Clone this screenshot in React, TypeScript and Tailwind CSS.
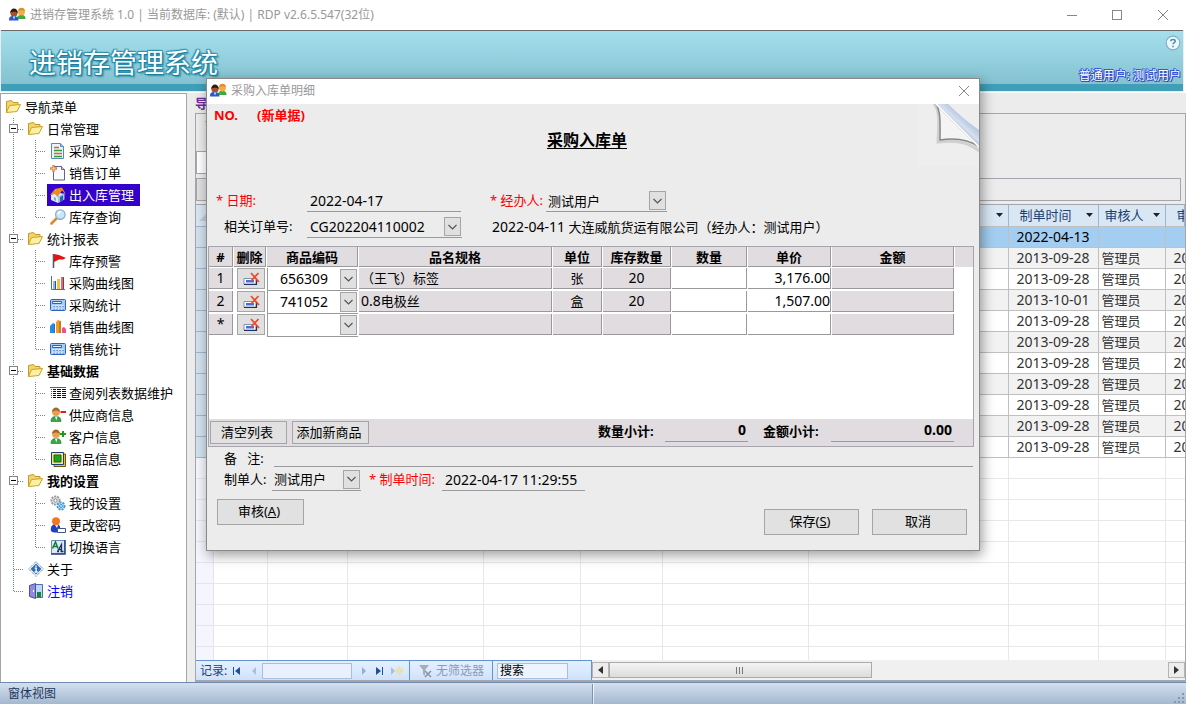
import clsx from "clsx";
import type { ReactNode } from "react";

type IconName =
  | "folder"
  | "doc"
  | "newDoc"
  | "home"
  | "search"
  | "flag"
  | "chart"
  | "calc"
  | "bars"
  | "list"
  | "userMinus"
  | "userPlus"
  | "box"
  | "gears"
  | "password"
  | "language"
  | "about"
  | "logout";

type Line = "tee" | "elbow" | "pipe" | "minus";

type TreeItem = {
  label: string;
  icon: IconName;
  lines: Line[];
  bold?: boolean;
  active?: boolean;
  link?: boolean;
};

const tree: TreeItem[] = [
  { label: "导航菜单", icon: "folder", lines: [] },
  { label: "日常管理", icon: "folder", lines: ["minus"] },
  { label: "采购订单", icon: "doc", lines: ["pipe", "tee"] },
  { label: "销售订单", icon: "newDoc", lines: ["pipe", "tee"] },
  { label: "出入库管理", icon: "home", lines: ["pipe", "tee"], active: true },
  { label: "库存查询", icon: "search", lines: ["pipe", "elbow"] },
  { label: "统计报表", icon: "folder", lines: ["minus"] },
  { label: "库存预警", icon: "flag", lines: ["pipe", "tee"] },
  { label: "采购曲线图", icon: "chart", lines: ["pipe", "tee"] },
  { label: "采购统计", icon: "calc", lines: ["pipe", "tee"] },
  { label: "销售曲线图", icon: "bars", lines: ["pipe", "tee"] },
  { label: "销售统计", icon: "calc", lines: ["pipe", "elbow"] },
  { label: "基础数据", icon: "folder", lines: ["minus"], bold: true },
  { label: "查阅列表数据维护", icon: "list", lines: ["pipe", "tee"] },
  { label: "供应商信息", icon: "userMinus", lines: ["pipe", "tee"] },
  { label: "客户信息", icon: "userPlus", lines: ["pipe", "tee"] },
  { label: "商品信息", icon: "box", lines: ["pipe", "elbow"] },
  { label: "我的设置", icon: "folder", lines: ["minus"], bold: true },
  { label: "我的设置", icon: "gears", lines: ["pipe", "tee"] },
  { label: "更改密码", icon: "password", lines: ["pipe", "tee"] },
  { label: "切换语言", icon: "language", lines: ["pipe", "elbow"] },
  { label: "关于", icon: "about", lines: ["tee"] },
  { label: "注销", icon: "logout", lines: ["elbow"], link: true },
];

const records = [
  { date: "2022-04-13", auditor: "", next: "" },
  { date: "2013-09-28", auditor: "管理员", next: "20" },
  { date: "2013-09-28", auditor: "管理员", next: "20" },
  { date: "2013-10-01", auditor: "管理员", next: "20" },
  { date: "2013-09-28", auditor: "管理员", next: "20" },
  { date: "2013-09-28", auditor: "管理员", next: "20" },
  { date: "2013-09-28", auditor: "管理员", next: "20" },
  { date: "2013-09-28", auditor: "管理员", next: "20" },
  { date: "2013-09-28", auditor: "管理员", next: "20" },
  { date: "2013-09-28", auditor: "管理员", next: "20" },
  { date: "2013-09-28", auditor: "管理员", next: "20" },
];

const items = [
  { no: "1", code: "656309", name: "（王飞）标签", unit: "张", stock: "20", price: "3,176.00" },
  { no: "2", code: "741052", name: "0.8电极丝", unit: "盒", stock: "20", price: "1,507.00" },
  { no: "*", code: "", name: "", unit: "", stock: "", price: "" },
];

export default function App() {
  return (
    <div className="relative flex h-screen flex-col overflow-hidden bg-[#ececec] font-['Noto_Sans','Noto_Sans_CJK_SC',sans-serif] text-[13px] leading-5 text-black">
      <TitleBar />
      <Banner />
      <div className="flex min-h-0 flex-1">
        <NavTree />
        <main className="flex min-w-0 flex-1 flex-col pl-2">
          <div className="h-5 font-bold text-[#7030a0]">导</div>
          <div className="flex min-h-0 flex-1 flex-col border border-b-2 border-[#a5a5ad]">
            <Filters />
            <Datasheet />
            <RecordBar />
          </div>
        </main>
      </div>
      <footer className="flex h-[22px] shrink-0 items-center border-t border-[#6f8bb0] bg-linear-to-b from-[#d3e0ef] to-[#a4b8d0] text-[12px] text-[#1e395b]">
        <span className="w-1/2 border-r border-[#7d93b0] pl-2">窗体视图</span>
        <span className="h-full flex-1 border-l border-white/70" />
        <svg width="12" height="12" className="self-end" fill="#8297b3">
          <path d="M8 1h2v2H8zM8 5h2v2H8zM8 9h2v2H8zM4 5h2v2H4zM4 9h2v2H4zM0 9h2v2H0z" />
        </svg>
      </footer>
      <OrderDialog />
    </div>
  );
}

function TitleBar() {
  return (
    <header className="flex h-[30px] shrink-0 items-center bg-white pl-[9px] text-[12px] text-[#999]">
      <UsersIcon />
      <span className="ml-1 flex-1">
        进销存管理系统 1.0 | 当前数据库: (默认) | RDP v2.6.5.547(32位)
      </span>
      <button aria-label="最小化" className="flex w-[45px] justify-center">
        <svg width="12" height="12" stroke="#888" fill="none">
          <path d="M1 6.5h10" />
        </svg>
      </button>
      <button aria-label="最大化" className="flex w-[45px] justify-center">
        <svg width="12" height="12" stroke="#888" fill="none">
          <rect x="1.5" y="1.5" width="9" height="9" />
        </svg>
      </button>
      <button aria-label="关闭" className="flex w-[47px] justify-center">
        <CloseIcon />
      </button>
    </header>
  );
}

function Banner() {
  return (
    <div className="h-[63px] shrink-0 border-r-2 border-b border-white pr-px pb-px pl-px">
      <div className="flex h-full justify-between border-t border-b-[7px] border-t-[#6a6a6a] border-b-[#3f9fb9] bg-linear-to-b from-[#a5dfec] to-[#84c2d1] pl-7">
        <h1 className="pt-3 text-[27px] leading-10 text-white [text-shadow:1px_1px_1px_#1b7f9c,-1px_-1px_1px_#2b93b0,1px_-1px_1px_#2b93b0,-1px_1px_1px_#1b7f9c,2px_2px_2px_#2b93b0]">
          进销存管理系统
        </h1>
        <div className="flex flex-col items-end justify-between pt-1 pr-0.5">
          <button aria-label="帮助">
            <svg width="16" height="16" viewBox="0 0 16 16">
              <circle cx="8" cy="8" r="6.8" fill="#eef7fb" stroke="#7fb0c8" strokeWidth="1.2" />
              <path d="M5.8 6.2C5.8 4 10.2 4 10.2 6.2 10.2 7.6 8 7.6 8 9.3M8 10.700v1.500" fill="none" stroke="#4a90b5" strokeWidth="1.600" />
            </svg>
          </button>
          <span className="text-[12px] leading-4 text-white [text-shadow:1px_0_#3355dd,-1px_0_#3355dd,0_1px_#3355dd,0_-1px_#3355dd,1px_1px_#333,-1px_-1px_#3355dd]">
            普通用户: 测试用户
          </span>
        </div>
      </div>
    </div>
  );
}

function NavTree() {
  return (
    <nav className="w-[187px] shrink-0 border-t border-r border-l border-[#a5a5a5] bg-white pt-[2px] pl-px">
      <ul>
        {tree.map((item, i) => (
          <li key={i} className="flex h-[22px]">
            {item.lines.map((line, n) => (
              <TreeLine key={n} line={line} />
            ))}
            <a
              href="#"
              className={clsx(
                "ml-px flex items-center gap-[3px] pr-1.5 pl-[3px] whitespace-nowrap",
                item.bold && "font-bold",
                item.active && "bg-[#3300cc] text-white",
                item.link && "text-[#0000ff]"
              )}
            >
              <TreeIcon name={item.icon} />
              {item.label}
            </a>
          </li>
        ))}
      </ul>
    </nav>
  );
}

function TreeLine({ line }: { line: Line }) {
  return (
    <svg width="22" height="22" className="shrink-0" fill="none" stroke="#6f8f6f" strokeDasharray="1 1">
      {line === "elbow" ? <path d="M11.5 0v11" /> : <path d="M11.5 0v22" />}
      {line !== "pipe" && <path d="M12 11.500h10" />}
      {line === "minus" && (
        <g strokeDasharray="none">
          <rect x="7.5" y="6.5" width="8" height="8" fill="#fff" stroke="#848484" />
          <path d="M9 10.500h5" stroke="#000" />
        </g>
      )}
    </svg>
  );
}

function Filters() {
  return (
    <div className="flex h-[90px] shrink-0 flex-col justify-end pr-1 pb-[3px]">
      <div className="flex-1 pl-[9px] font-bold text-[#ed7d31]">*</div>
      <input
        aria-label="查询条件"
        className="mb-1 h-[23px] w-[200px] border border-[#a5a5ad] bg-white"
      />
      <div className="flex h-[23px] border border-[#a5a5ad]">
        <button aria-label="查询" className="w-20 border-r border-[#a5a5ad] bg-[#e0e0e0]" />
      </div>
    </div>
  );
}

function Datasheet() {
  return (
    <div className="min-h-0 flex-1 overflow-hidden border-t border-[#a5a5ad] bg-white">
      <table className="w-full table-fixed border-collapse text-[#333]">
        <colgroup>
          <col className="w-[17px]" />
          <col className="w-[54px]" />
          <col className="w-[80px]" />
          <col className="w-[136px]" />
          <col className="w-[97px]" />
          <col className="w-[82px]" />
          <col className="w-[146px]" />
          <col className="w-[200px]" />
          <col className="w-[90px]" />
          <col className="w-[67px]" />
          <col />
        </colgroup>
        <thead>
          <tr className="h-[21px] bg-[#d9e7f5] text-[#1f3f6e]">
            <th className="border-r border-[#9eb6ce] p-0">
              <svg width="16" height="16" className="block">
                <path d="M14 3v11H3z" fill="#c3ccd6" />
              </svg>
            </th>
            {Array.from({ length: 6 }, (_, i) => (
              <th key={i} className="border-r border-[#9eb6ce] p-0" />
            ))}
            <SortHead label="" />
            <SortHead label="制单时间" />
            <SortHead label="审核人" narrow />
            <SortHead label="审" />
          </tr>
        </thead>
        <tbody>
          {records.map((row, i) => (
            <tr
              key={i}
              className={clsx(
                "h-[21px]",
                i === 0 ? "bg-[#a3cef1] text-black" : i % 2 ? "bg-[#f2f2f2]" : "bg-white"
              )}
            >
              <td className="border border-l-0 border-[#9eb6ce] bg-[#d3e2f0] p-0" />
              {Array.from({ length: 7 }, (_, n) => (
                <td key={n} className="border border-[#c0c0c0] p-0" />
              ))}
              <td className="border border-[#c0c0c0] p-0 text-center text-[14px]">{row.date}</td>
              <td className="border border-[#c0c0c0] p-0 pl-[3px]">{row.auditor}</td>
              <td className="overflow-hidden border border-r-0 border-[#c0c0c0] p-0 pl-2 text-[14px]">
                {row.next}
              </td>
            </tr>
          ))}
          {Array.from({ length: 11 }, (_, i) => (
            <tr key={i} className="h-[21px]">
              <td className="border border-l-0 border-[#e4e4ee] bg-[#f5f5fd] p-0" />
              {Array.from({ length: 10 }, (_, n) => (
                <td key={n} className="border border-r-0 border-[#e8e8e8] p-0" />
              ))}
            </tr>
          ))}
        </tbody>
      </table>
    </div>
  );
}

function SortHead({ label, narrow }: { label: string; narrow?: boolean }) {
  return (
    <th className="overflow-hidden border-r border-[#9eb6ce] p-0 font-normal">
      <div
        className={clsx("flex items-center justify-between pr-[5px]", narrow ? "pl-1.5" : "pl-[11px]")}
      >
        <span className="whitespace-nowrap">{label}</span>
        <svg width="7" height="4" className="shrink-0">
          <path d="M0 0h7L3.500 4z" fill="#222" />
        </svg>
      </div>
    </th>
  );
}

function RecordBar() {
  return (
    <div className="flex h-5 shrink-0 text-[12px] text-[#1f3f6e]">
      <div className="flex w-[396px] shrink-0 items-center border-t border-r border-[#6593cf] bg-linear-to-b from-[#e3efff] via-[#dbeaff] to-[#cfe1f8]">
        <label htmlFor="record" className="w-9 pl-1">
          记录:
        </label>
        <button aria-label="第一条" className="w-[15px]">
          <svg width="9" height="8" fill="#1f4e9c">
            <path d="M1 0h1v8H1zM8 0v8L3 4z" />
          </svg>
        </button>
        <button aria-label="上一条" className="w-[15px]">
          <svg width="8" height="8" className="ml-1" fill="#a8bfe0">
            <path d="M5 0v8L1 4z" />
          </svg>
        </button>
        <input id="record" className="h-4 w-[90px] border border-[#a9bfdf] bg-[#e8f1fd]" />
        <button aria-label="下一条" className="flex w-6 justify-center">
          <svg width="6" height="8" fill="#8fb0dc">
            <path d="M1 0v8l4-4z" />
          </svg>
        </button>
        <button aria-label="最后一条" className="w-[15px]">
          <svg width="9" height="8" fill="#1f4e9c">
            <path d="M6 0h1v8H6zM0 0v8l5-4z" />
          </svg>
        </button>
        <button aria-label="新记录" className="w-[18px]">
          <svg width="14" height="10">
            <path d="M0 1v8l4-4z" fill="#a8bfe0" />
            <path d="M8.500 0v10M4 5h9M5.500 2l6 6M11.500 2l-6 6" stroke="#e8e0b0" strokeWidth="1.500" />
          </svg>
        </button>
        <div className="flex h-full w-[84px] items-center gap-[3px] border-x border-[#6593cf] pl-2 whitespace-nowrap text-[#8b9cb5]">
          <svg width="15" height="14" fill="none">
            <path d="M1 1h10L7 6v6L5 10V6z" fill="#a8adb5" />
            <path d="M7 7l6 6M13 7l-6 6" stroke="#8a93a3" strokeWidth="1.500" />
          </svg>
          无筛选器
        </div>
        <input
          aria-label="搜索"
          defaultValue="搜索"
          className="ml-1 h-4 w-[71px] border border-[#a9bfdf] bg-[#ecf4fd] pl-0.5 text-black"
        />
      </div>
      <div className="flex flex-1 bg-[#f0f0f0] pt-0.5 pb-0.5">
        <button aria-label="向左滚动" className="flex w-[17px] items-center justify-center border border-[#b5b5b5] bg-[#ededed]">
          <svg width="5" height="8">
            <path d="M5 0v8L0 4z" fill="#333" />
          </svg>
        </button>
        <div className="flex flex-1">
          <div className="flex w-[47%] items-center justify-center border border-[#aaa] bg-linear-to-b from-[#f4f4f4] to-[#dcdcdc]">
            <svg width="8" height="7" stroke="#777">
              <path d="M.5 0v7M3.500 0v7M6.500 0v7" />
            </svg>
          </div>
        </div>
        <button aria-label="向右滚动" className="flex w-[17px] items-center justify-center border border-[#b5b5b5] bg-[#ededed]">
          <svg width="5" height="8">
            <path d="M0 0v8l5-4z" fill="#333" />
          </svg>
        </button>
      </div>
    </div>
  );
}

function OrderDialog() {
  return (
    <div
      role="dialog"
      aria-label="采购入库单明细"
      className="absolute top-[78px] left-[206px] w-[774px] border border-[#8a8a8a] bg-[#ececec] shadow-[2px_4px_12px_rgba(0,0,0,0.4)]"
    >
      <div className="flex h-[25px] items-center justify-between bg-white pr-[9px] pb-px pl-[3px] text-[12px] text-[#999]">
        <span className="flex items-center gap-1">
          <UsersIcon />
          采购入库单明细
        </span>
        <button aria-label="关闭">
          <CloseIcon />
        </button>
      </div>

      <div className="relative h-[84px] pt-px">
        <div className="flex gap-[19px] pl-[7px] font-bold text-[#ff0000]">
          <span>NO.</span>
          <span>(新单据)</span>
        </div>
        <h2 className="mr-3 pt-[3px] text-center text-[16px] leading-6 font-bold underline underline-offset-2">
          采购入库单
        </h2>
        <PageCurl />
      </div>

      <div className="flex h-[26px] items-center">
        <FieldLabel htmlFor="date" required className="w-[100px] pl-[9px]">
          日期:
        </FieldLabel>
        <input
          id="date"
          defaultValue="2022-04-17"
          className="h-[22px] w-[154px] border-b border-[#999] pl-[3px] text-[14px]"
        />
        <FieldLabel htmlFor="handler" required className="w-[85px] pl-[29px]">
          经办人:
        </FieldLabel>
        <Combo id="handler" value="测试用户" className="w-[121px] border-b pl-[2px]" />
      </div>
      <div className="flex h-[26px] items-center">
        <FieldLabel htmlFor="order" className="w-[100px] pl-[17px]">
          相关订单号:
        </FieldLabel>
        <Combo id="order" value="CG202204110002" className="w-[155px] border-b pl-[3px] text-[14px]" />
        <span className="pl-[30px]">
          <span className="text-[14px]">2022-04-11</span> 大连威航货运有限公司（经办人：测试用户）
        </span>
      </div>

      <div className="mt-[6px] mr-[5px] ml-px border border-[#a5a5ad] bg-white">
        <div className="h-[172px]">
          <ItemTable />
        </div>
        <div className="flex h-[27px] items-center bg-[#e0dcdf] pl-px">
          <PushButton className="h-[23px] w-[77px]">清空列表</PushButton>
          <PushButton className="ml-[5px] h-[23px] w-[77px]">添加新商品</PushButton>
          <label htmlFor="qty" className="w-[296px] pb-1 pl-[229px] font-bold">
            数量小计:
          </label>
          <input
            id="qty"
            readOnly
            value="0"
            className="h-[19px] w-[83px] border-b border-[#999] pr-0.5 pb-1 text-right text-[14px] font-bold"
          />
          <label htmlFor="sum" className="w-[83px] pb-1 pl-[15px] font-bold">
            金额小计:
          </label>
          <input
            id="sum"
            readOnly
            value="0.00"
            className="h-[19px] w-[123px] border-b border-[#999] pr-0.5 pb-1 text-right text-[14px] font-bold"
          />
        </div>
      </div>

      <div className="flex h-[21px] items-center pr-1.5">
        <label htmlFor="remark" className="w-[67px] pl-[17px] whitespace-pre">
          备   注:
        </label>
        <input id="remark" className="h-[19px] min-w-0 flex-1 border-b border-[#999]" />
      </div>
      <div className="flex h-[23px] items-center">
        <FieldLabel htmlFor="maker" className="w-[65px] pl-[17px]">
          制单人:
        </FieldLabel>
        <Combo id="maker" value="测试用户" className="w-[89px] border-b pl-[2px]" />
        <FieldLabel htmlFor="made" required className="w-[81px] pl-2">
          制单时间:
        </FieldLabel>
        <input
          id="made"
          defaultValue="2022-04-17 11:29:55"
          className="h-[22px] w-[143px] border-b border-[#999] pl-[3px] text-[14px]"
        />
      </div>
      <div className="flex h-[59px] pt-2 pr-3 pl-2.5">
        <PushButton className="h-[26px] w-[87px]">
          审核(<u>A</u>)
        </PushButton>
        <div className="ml-auto flex gap-[13px] pt-2.5">
          <PushButton className="h-[26px] w-[95px]">
            保存(<u>S</u>)
          </PushButton>
          <PushButton className="h-[26px] w-[95px]">取消</PushButton>
        </div>
      </div>
    </div>
  );
}

function ItemTable() {
  return (
    <table className="w-full table-fixed border-collapse">
      <colgroup>
        <col className="w-[25px]" />
        <col className="w-[33px]" />
        <col className="w-[92px]" />
        <col className="w-[194px]" />
        <col className="w-[50px]" />
        <col className="w-[69px]" />
        <col className="w-[76px]" />
        <col className="w-[84px]" />
        <col className="w-[123px]" />
        <col />
      </colgroup>
      <thead>
        <tr>
          {["#", "删除", "商品编码", "品名规格", "单位", "库存数量", "数量", "单价", "金额"].map((h) => (
            <th key={h} className="p-0">
              <div className="mr-px mb-px h-5 border-r border-b border-[#999] bg-[#e0dcdf] whitespace-nowrap">
                {h}
              </div>
            </th>
          ))}
          <th className="p-0">
            <div className="mb-px h-5 bg-[#e0dcdf]" />
          </th>
        </tr>
      </thead>
      <tbody>
        {items.map((row) => (
          <tr key={row.no}>
            <Cell className="text-center text-[14px]">{row.no}</Cell>
            <td className="p-0 pb-0.5">
              <button
                aria-label="删除"
                className="ml-[3px] flex h-[21px] w-7 items-center justify-center border border-[#a5a5a5] bg-[#e0e0e0]"
              >
                <DeleteIcon />
              </button>
            </td>
            <td className="p-0">
              <Combo
                label="商品编码"
                value={row.code}
                className="h-[23px] w-[91px] border-b border-l bg-white pl-3 text-[14px]"
              />
            </td>
            <Cell className="pl-0.5">
              {row.name.startsWith("0.8") ? (
                <>
                  <span className="text-[14px]">0.8</span>电极丝
                </>
              ) : (
                row.name
              )}
            </Cell>
            <Cell className="text-center">{row.unit}</Cell>
            <Cell className="text-center text-[14px]">{row.stock}</Cell>
            <Cell editable>
              <input aria-label="数量" className="block h-5 w-full" />
            </Cell>
            <Cell editable>
              <input
                aria-label="单价"
                defaultValue={row.price}
                className="block h-5 w-full text-right text-[14px]"
              />
            </Cell>
            <Cell />
          </tr>
        ))}
      </tbody>
    </table>
  );
}

function Cell({
  className,
  editable,
  children,
}: {
  className?: string;
  editable?: boolean;
  children?: ReactNode;
}) {
  return (
    <td className="p-0">
      <div
        className={clsx(
          "mr-px mb-0.5 h-[21px] border-r border-b border-[#999] leading-5 whitespace-nowrap",
          editable ? "bg-white" : "bg-[#e0dcdf]",
          className
        )}
      >
        {children}
      </div>
    </td>
  );
}

function FieldLabel({
  htmlFor,
  required,
  className,
  children,
}: {
  htmlFor: string;
  required?: boolean;
  className?: string;
  children: ReactNode;
}) {
  return (
    <label
      htmlFor={htmlFor}
      className={clsx("shrink-0 pb-0.5 whitespace-nowrap", required && "text-[#ff0000]", className)}
    >
      {required && "* "}
      {children}
    </label>
  );
}

function Combo({
  id,
  label,
  value,
  className,
}: {
  id?: string;
  label?: string;
  value: string;
  className?: string;
}) {
  return (
    <div className={clsx("relative flex h-[22px] shrink-0 items-center border-[#999]", className)}>
      <select id={id} aria-label={label} className="h-full w-full appearance-none" defaultValue={value}>
        <option>{value}</option>
      </select>
      <span className="pointer-events-none absolute top-px right-px bottom-px flex w-[17px] items-center justify-center border border-[#a5a5a5] bg-[#e0e0e0]">
        <svg width="9" height="6" fill="none" stroke="#555" strokeWidth="1.2">
          <path d="M.5 1l4 4 4-4" />
        </svg>
      </span>
    </div>
  );
}

function PushButton({ className, children }: { className: string; children: ReactNode }) {
  return (
    <button
      className={clsx(
        "border border-[#a5a5a5] bg-[#e1e1e1] pr-[3px] pb-0.5 leading-5 whitespace-nowrap",
        className
      )}
    >
      {children}
    </button>
  );
}

function CloseIcon() {
  return (
    <svg width="12" height="12" stroke="#888" fill="none">
      <path d="M1 1l10 10M11 1L1 11" />
    </svg>
  );
}

// curled paper corner at the top right of the form
function PageCurl() {
  return (
    <svg width="62" height="62" className="absolute top-0 right-0">
      <defs>
        <linearGradient id="roll" gradientUnits="userSpaceOnUse" x1="48" y1="14" x2="38" y2="25">
          <stop offset="0" stopColor="#b4c6e0" />
          <stop offset="0.5" stopColor="#d5e0f0" />
          <stop offset="1" stopColor="#a0abba" />
        </linearGradient>
      </defs>
      <rect width="62" height="62" fill="#eee" />
      <path d="M17 0c6 6 5 18 4 38 15-2 30-1 41 9" fill="none" stroke="#d0d0d0" strokeWidth="3" />
      <path d="M19 0c5 8 4 20 4 36 14-2 28-1 39 7z" fill="#f4f4f4" stroke="#888" strokeWidth="1.500" />
      <path d="M19 0h12c10 10 21 19 31 26v17z" fill="url(#roll)" />
      <path d="M19 0l43 43" stroke="#fff" strokeWidth="1.600" />
    </svg>
  );
}

function UsersIcon() {
  return (
    <svg width="17" height="16" viewBox="0 0 17 16">
      <path d="M8 12c0-3 1-4 4.500-4s4 2 4 4z" fill="#3faa3a" />
      <circle cx="12.500" cy="5" r="3.400" fill="#f0ad45" />
      <path d="M9 4c0-4.500 7-4.500 7 0-2-1-5-1-7 0z" fill="#d9902b" />
      <path d="M0 13.500c0-3.500 1-4.500 4.500-4.500s5 2 5 4.500z" fill="#2459d0" />
      <circle cx="5" cy="6" r="3.600" fill="#a8502a" />
      <path d="M1.200 6c0-6 7.600-6 7.600 0-2-1-5-2-7.600 0z" fill="#2c1c17" />
      <path d="M4 9.500h2l-1 3z" fill="#fff" />
    </svg>
  );
}

function DeleteIcon() {
  return (
    <svg width="17" height="14" viewBox="0 0 17 14">
      <path d="M1 6.500h12v5.500H1z" fill="#fff" stroke="#8592a8" />
      <path d="M1 12.500h12.500V8" fill="none" stroke="#1c2f66" strokeWidth="1.200" />
      <path d="M3 8h8v2.500H3z" fill="#3c6fe0" />
      <path d="M8 1l8 9M15.500 1L8 9" stroke="#f04a28" strokeWidth="1.800" />
    </svg>
  );
}

function TreeIcon({ name }: { name: IconName }) {
  return (
    <svg width="16" height="16" viewBox="0 0 16 16" className="shrink-0">
      {iconShapes[name]}
    </svg>
  );
}

const person = (
  <>
    <path d="M1 14.500c0-4 2-5 5-5s5 1 5 5z" fill="#35a845" stroke="#23702c" strokeWidth=".6" />
    <path d="M5 9.500h2.500l-1.200 4z" fill="#fff" />
    <circle cx="6" cy="5.300" r="3.800" fill="#e8a04c" />
    <path d="M2 5c0-6 8-6 8 0-3-2-5-2-8 0z" fill="#a8642a" />
  </>
);

const iconShapes: Record<IconName, ReactNode> = {
  folder: (
    <>
      <path d="M.5 13.500v-11l5-1 1.500 2h5v3" fill="#f3d568" stroke="#c39a28" />
      <path d="M.5 13.500l3-7 11-1-3.500 7z" fill="#fff0a0" stroke="#c9a22f" />
    </>
  ),
  doc: (
    <>
      <path d="M1.500.5h9l3 3v12h-12z" fill="#eaf3ff" stroke="#5b87bd" />
      <path d="M10.500.5v3h3" fill="#a8c6ea" stroke="#5b87bd" />
      <path d="M4 4.500h5M4 10.500h8" stroke="#e06030" strokeWidth="1.300" />
      <path d="M4 7.500h8M4 13.500h8" stroke="#2ca02c" strokeWidth="1.300" />
    </>
  ),
  newDoc: (
    <>
      <path d="M3.500 1.500h8l3 3v10.500h-11z" fill="#fafaff" stroke="#62628f" />
      <path d="M11.500 1.500v3h3" fill="#d8d8ec" stroke="#62628f" />
      <path d="M3.500 0v7M0 3.500h7" stroke="#f08030" strokeWidth="2.400" />
      <path d="M3.500 1.500v4M1.500 3.500h4" stroke="#ffd0a0" strokeWidth=".8" />
    </>
  ),
  home: (
    <>
      <path d="M1 8l5-3 8 2v5l-6 4-7-3z" fill="#dcecff" />
      <path d="M8 9.500l6.500-3.500v6.500l-6.500 3.500z" fill="#9cc4ee" />
      <path d="M0 8l5-6 7-1.500 4 7-4-4-4.500 6.500-2.500-3z" fill="#f08a24" />
      <path d="M10 10l3-1.500v5l-3 1.500z" fill="#2d62a8" />
      <path d="M4 10l2 1v3l-2-1z" fill="#7fa8d6" />
    </>
  ),
  search: (
    <>
      <path d="M1.500 14.500l5-5" stroke="#d98a35" strokeWidth="2.600" strokeLinecap="round" />
      <circle cx="10.300" cy="5.600" r="4.700" fill="#c9e6fb" stroke="#8fb0cf" strokeWidth="1.400" />
      <path d="M8 5.500c0-2 1.500-3 3-2.800" fill="none" stroke="#fff" strokeWidth="1.500" />
    </>
  ),
  flag: (
    <>
      <path d="M3.500 1v14" stroke="#50606a" strokeWidth="1.600" />
      <path d="M4 1l5 1 7 3-3 1.500-4 0-5 2.500z" fill="#e31313" />
    </>
  ),
  chart: (
    <>
      <path d="M1.500 1v13.500H15" fill="none" stroke="#3c74b8" />
      <path d="M3 6h3v8H3z" fill="#8db8ee" />
      <path d="M7 4h3v10H7z" fill="#f0c24b" />
      <path d="M11 2h3v12h-3z" fill="#cf6f7d" />
      <path d="M5 6h1v8H5z" fill="#244f9e" />
      <path d="M13 2h1v12h-1z" fill="#8f3348" />
    </>
  ),
  calc: (
    <>
      <rect x=".5" y="2.500" width="15" height="11" rx="1" fill="#a5cdf8" stroke="#2b62c8" />
      <path d="M2.500 4.500h9v2h-9z" fill="#e7f4ff" stroke="#2b62c8" />
      <path d="M2.500 9h11M2.500 11.500h11" stroke="#fff" strokeWidth="1.600" strokeDasharray="2 1" />
      <path d="M3.500 9.500h10M3.500 12h10" stroke="#1747a8" strokeDasharray="1 2" />
    </>
  ),
  bars: (
    <>
      <path d="M0 7l3-3 2 1v9H0z" fill="#2889e8" />
      <path d="M6 3l2-2 3 1v12H6z" fill="#f59a23" />
      <path d="M12 9l2-1 2 2v4h-4z" fill="#ee4e96" />
      <path d="M4 5l1 1v8H4zM9 3l2-1v12H9z" fill="#00000030" />
    </>
  ),
  list: (
    <>
      <path d="M0 2.500h16" stroke="#2b5fc4" />
      <path d="M3 4.500h3M7 4.500h4M12 4.500h4M3 6.500h3M7 6.500h4M12 6.500h4M3 8.500h3M7 8.500h4M12 8.500h4M3 10.500h3M7 10.500h4M12 10.500h4M3 12.500h3M7 12.500h4M12 12.500h4" stroke="#111" />
      <path d="M1.500 4v10" stroke="#2b5fc4" strokeDasharray="1 1" />
    </>
  ),
  userMinus: (
    <>
      {person}
      <path d="M10.500 5h5.500" stroke="#e02020" strokeWidth="2" />
    </>
  ),
  userPlus: (
    <>
      {person}
      <path d="M10 5h6M13 2v6" stroke="#16a016" strokeWidth="2" />
    </>
  ),
  box: (
    <>
      <path d="M4 3h11.500v12.500H4z" fill="#e6bd3e" stroke="#6d5410" />
      <path d="M1.500 1.500h12v12h-12z" fill="#ffe680" stroke="#1d3f78" />
      <path d="M4 4h7v7H4z" fill="#22a022" stroke="#176a17" />
    </>
  ),
  gears: (
    <>
      <circle cx="5.500" cy="5.500" r="4.200" fill="#ddd" stroke="#999" strokeWidth="1.800" strokeDasharray="2 1" />
      <circle cx="5.500" cy="5.500" r="1.600" fill="#fff" stroke="#888" />
      <circle cx="11" cy="11" r="3.600" fill="#a8dcf8" stroke="#4a9ed6" strokeWidth="1.800" strokeDasharray="2 1" />
      <circle cx="11" cy="11" r="1.400" fill="#fff" stroke="#3a8ec9" />
    </>
  ),
  password: (
    <>
      <path d="M1 14c-1-5 2-7 5-7s5 2 4 7c-2 2-7 2-9 0z" fill="#1f3fc8" />
      <path d="M5 8h3l-1 3z" fill="#fff" />
      <circle cx="6" cy="4.200" r="4" fill="#f2762a" />
      <path d="M7.500 11.500h8v4h-8z" fill="#fff" stroke="#41558a" />
    </>
  ),
  language: (
    <>
      <path d="M1.500 1.500h13v13h-13z" fill="#dceaf5" stroke="#6f8db5" />
      <path d="M15 1v14H1" fill="none" stroke="#26437c" strokeWidth="1.500" />
      <path d="M2.500 9.500L5.500 3l2.500 6.500M4 7.500h3" fill="none" stroke="#177a35" strokeWidth="1.500" />
      <path d="M7.500 12.500l4-7v7M9 10.500h3M7 12.500h2M10.500 12.500h3" fill="none" stroke="#1c2f75" strokeWidth="1.300" />
    </>
  ),
  about: (
    <>
      <path d="M8 .7L15.300 8 8 15.300.7 8z" fill="#fff" stroke="#285c9c" strokeDasharray="1 1" />
      <path d="M8 2.500L13.500 8 8 13.500 2.500 8z" fill="#2e6db4" />
      <path d="M6.700 7.200h1.500v3.800M8 4.500v1.500M6.500 11h3.200" fill="none" stroke="#fff" strokeWidth="1.300" />
    </>
  ),
  logout: (
    <>
      <path d="M7 1.500h7.500v13H7z" fill="#b7dbf7" stroke="#5b66b0" />
      <path d="M9 9h4v5H9z" fill="#16813a" />
      <path d="M1.500 2.500l6-2v15l-6-2z" fill="#8f8ddb" stroke="#4f4da0" />
      <path d="M5.500 7v2" stroke="#fff" />
    </>
  ),
};
